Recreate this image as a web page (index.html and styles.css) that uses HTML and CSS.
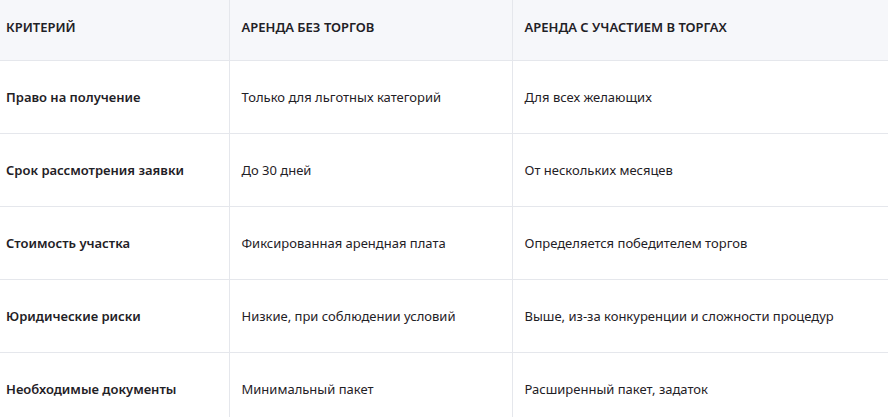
FILE: index.html
```html
<!DOCTYPE html>
<html lang="ru">
<head>
<meta charset="utf-8">
<link rel="stylesheet" href="styles.css">
</head>
<body>
<table class="cmp">
  <colgroup>
    <col class="c1"><col class="c2"><col class="c3">
  </colgroup>
  <thead>
    <tr>
      <th>Критерий</th>
      <th>Аренда без торгов</th>
      <th>Аренда с участием в торгах</th>
    </tr>
  </thead>
  <tbody>
    <tr><td>Право на получение</td><td>Только для льготных категорий</td><td>Для всех желающих</td></tr>
    <tr><td>Срок рассмотрения заявки</td><td>До 30 дней</td><td>От нескольких месяцев</td></tr>
    <tr><td>Стоимость участка</td><td>Фиксированная арендная плата</td><td>Определяется победителем торгов</td></tr>
    <tr><td>Юридические риски</td><td>Низкие, при соблюдении условий</td><td>Выше, из-за конкуренции и сложности процедур</td></tr>
    <tr><td>Необходимые документы</td><td>Минимальный пакет</td><td>Расширенный пакет, задаток</td></tr>
  </tbody>
</table>
</body>
</html>
```
FILE: styles.css
```css
html, body {
  margin: 0;
  padding: 0;
  background: #fff;
  overflow: hidden;
}
.cmp {
  border-collapse: collapse;
  table-layout: fixed;
  width: 888px;
  font-family: "Noto Sans", "Open Sans", sans-serif;
  font-size: 13px;
  color: #1f2126;
}
.c1 { width: 229px; }
.c2 { width: 283px; }
.c3 { width: 376px; }
.cmp th, .cmp td {
  box-sizing: border-box;
  text-align: left;
  padding: 0 12px;
  border-left: 1px solid #e5e7ec;
  border-bottom: 1px solid #e5e7ec;
  vertical-align: middle;
  white-space: nowrap;
}
.cmp th:first-child, .cmp td:first-child {
  border-left: none;
  padding-left: 6px;
}
.cmp th {
  height: 60px;
  background: #f6f7fa;
  font-weight: 600;
  text-transform: uppercase;
  padding-bottom: 5px;
}
.cmp td {
  height: 73px;
  font-weight: 400;
}
.cmp td:first-child {
  font-weight: 600;
}
```
